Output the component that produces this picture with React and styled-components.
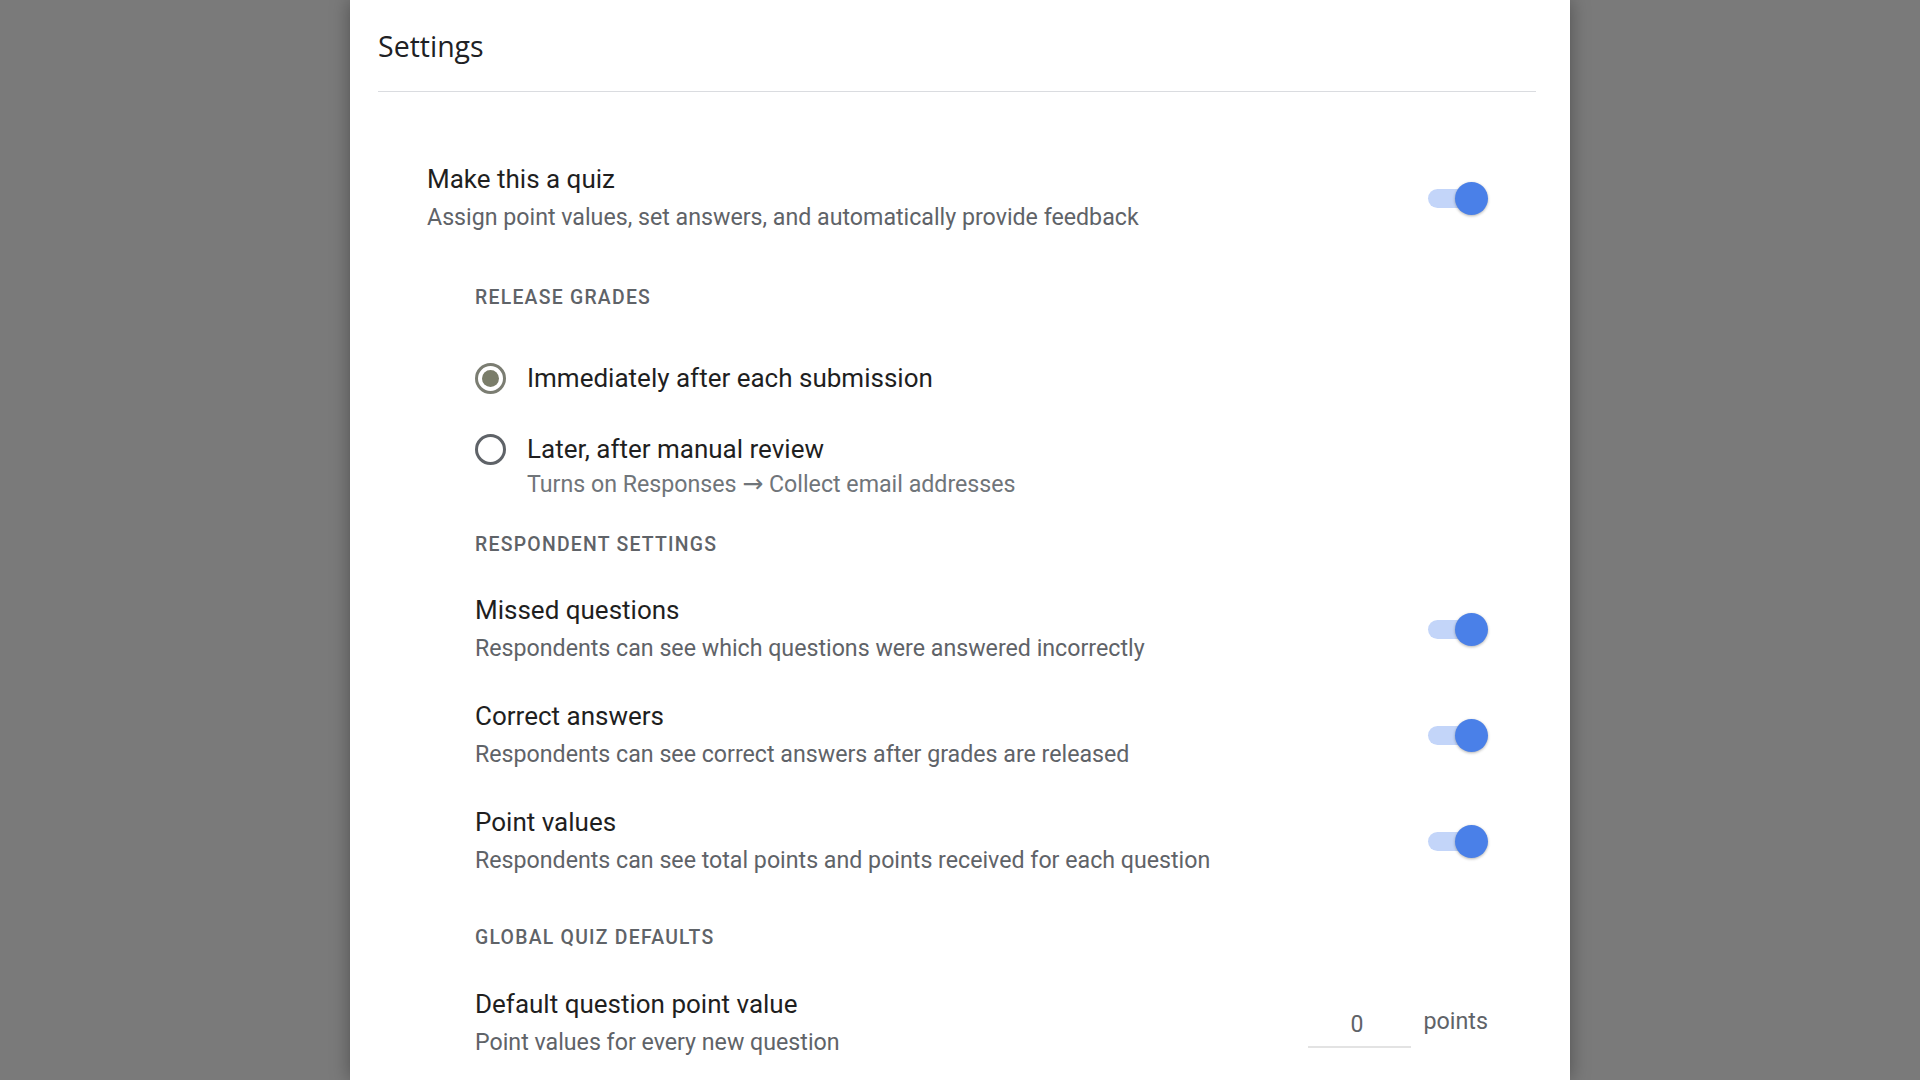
import React from 'react'
import styled, { createGlobalStyle } from 'styled-components'

const GlobalStyle = createGlobalStyle`
  html, body {
    margin: 0;
    padding: 0;
    width: 1920px;
    height: 1080px;
    overflow: hidden;
    background: #7a7a7a;
    font-family: Roboto, "Liberation Sans", sans-serif;
  }
`

const Page = styled.div`
  display: flex;
  justify-content: center;
  height: 1080px;
  background: #7a7a7a;
`

const Panel = styled.div`
  width: 1220px;
  height: 1080px;
  background: #fff;
  box-shadow: 0 0 18px rgba(0, 0, 0, 0.35);
  overflow: hidden;
`

const Header = styled.div`
  margin: 0 34px 0 28px;
  padding: 28px 0 27px;
  border-bottom: 1px solid #dadce0;
`

const Title = styled.h1`
  margin: 0;
  font-family: "Open Sans", Roboto, sans-serif;
  font-weight: 400;
  font-size: 28.5px;
  line-height: 36px;
  color: #202124;
`

const Body = styled.div`
  padding: 71px 82px 0 77px;
`

const Row = styled.div`
  display: flex;
  align-items: center;
  justify-content: space-between;
  margin-bottom: ${(p) => p.gap || 0}px;
`

const Text = styled.div`
  display: flex;
  flex-direction: column;
  gap: 6px;
`

const Label = styled.div`
  font-size: 26px;
  line-height: 32px;
  color: #1f1f1f;
`

const Desc = styled.div`
  font-size: 23.2px;
  line-height: 32px;
  color: #5f6368;
`

const Nested = styled.div`
  padding-left: 48px;
`

const SectionTitle = styled.div`
  margin: ${(p) => p.top}px 0 ${(p) => p.bottom}px;
  font-size: 19.4px;
  line-height: 24px;
  font-weight: 500;
  letter-spacing: 1.25px;
  color: #5f6368;
  text-transform: uppercase;
`

const Track = styled.div`
  position: relative;
  width: 58px;
  height: 19px;
  margin-right: 2px;
  border-radius: 10px;
  background: #c3d5f9;
  flex-shrink: 0;
`

const Knob = styled.div`
  position: absolute;
  right: -2px;
  top: -7px;
  width: 33px;
  height: 33px;
  border-radius: 50%;
  background: #4a80e8;
  box-shadow: 0 1px 3px rgba(0, 0, 0, 0.3);
`

const Toggle = () => (
  <Track>
    <Knob />
  </Track>
)

const RadioRow = styled.div`
  display: flex;
  align-items: flex-start;
  gap: 21px;
  margin-bottom: ${(p) => p.gap || 0}px;
`

const RadioCircle = styled.div`
  box-sizing: border-box;
  width: 31px;
  height: 31px;
  margin-top: 1px;
  border-radius: 50%;
  border: 3px solid ${(p) => (p.checked ? '#7b7d72' : '#5f6368')};
  display: flex;
  align-items: center;
  justify-content: center;
  flex-shrink: 0;

  &::after {
    content: '';
    display: ${(p) => (p.checked ? 'block' : 'none')};
    width: 17px;
    height: 17px;
    border-radius: 50%;
    background: #7a7d69;
  }
`

const RadioText = styled.div`
  display: flex;
  flex-direction: column;
  gap: 4px;
`

const SubNote = styled.div`
  font-size: 23.2px;
  line-height: 30px;
  color: #70757a;
`

const Arrow = styled.span`
  font-family: "DejaVu Sans", sans-serif;
  font-size: 25px;
`

const PointsField = styled.div`
  display: flex;
  align-items: flex-start;
  gap: 12px;
  margin-top: 12px;
`

const NumberInput = styled.div`
  width: 103px;
  padding: 0 6px 6px 0;
  box-sizing: border-box;
  border-bottom: 2px solid #e3e3e3;
  text-align: center;
  font-size: 23px;
  line-height: 30px;
  color: #5f6368;
`

const Unit = styled.div`
  margin-top: -4px;
  font-size: 23.3px;
  line-height: 30px;
  color: #5f6368;
`

const settings = [
  ['Missed questions', 'Respondents can see which questions were answered incorrectly'],
  ['Correct answers', 'Respondents can see correct answers after grades are released'],
  ['Point values', 'Respondents can see total points and points received for each question'],
]

export default function App() {
  return (
    <Page>
      <GlobalStyle />
      <Panel>
        <Header>
          <Title>Settings</Title>
        </Header>
        <Body>
          <Row>
            <Text>
              <Label>Make this a quiz</Label>
              <Desc>Assign point values, set answers, and automatically provide feedback</Desc>
            </Text>
            <Toggle />
          </Row>
          <Nested>
            <SectionTitle top={53} bottom={52}>Release grades</SectionTitle>
            <RadioRow gap={39}>
              <RadioCircle checked />
              <RadioText>
                <Label>Immediately after each submission</Label>
              </RadioText>
            </RadioRow>
            <RadioRow>
              <RadioCircle />
              <RadioText>
                <Label>Later, after manual review</Label>
                <SubNote>
                  Turns on Responses <Arrow>→</Arrow> Collect email addresses
                </SubNote>
              </RadioText>
            </RadioRow>
            <SectionTitle top={34} bottom={37}>Respondent settings</SectionTitle>
            {settings.map(([label, desc], i) => (
              <Row key={label} gap={i === settings.length - 1 ? 0 : 36}>
                <Text>
                  <Label>{label}</Label>
                  <Desc>{desc}</Desc>
                </Text>
                <Toggle />
              </Row>
            ))}
            <SectionTitle top={50} bottom={38}>Global quiz defaults</SectionTitle>
            <Row>
              <Text>
                <Label>Default question point value</Label>
                <Desc>Point values for every new question</Desc>
              </Text>
              <PointsField>
                <NumberInput>0</NumberInput>
                <Unit>points</Unit>
              </PointsField>
            </Row>
          </Nested>
        </Body>
      </Panel>
    </Page>
  )
}
